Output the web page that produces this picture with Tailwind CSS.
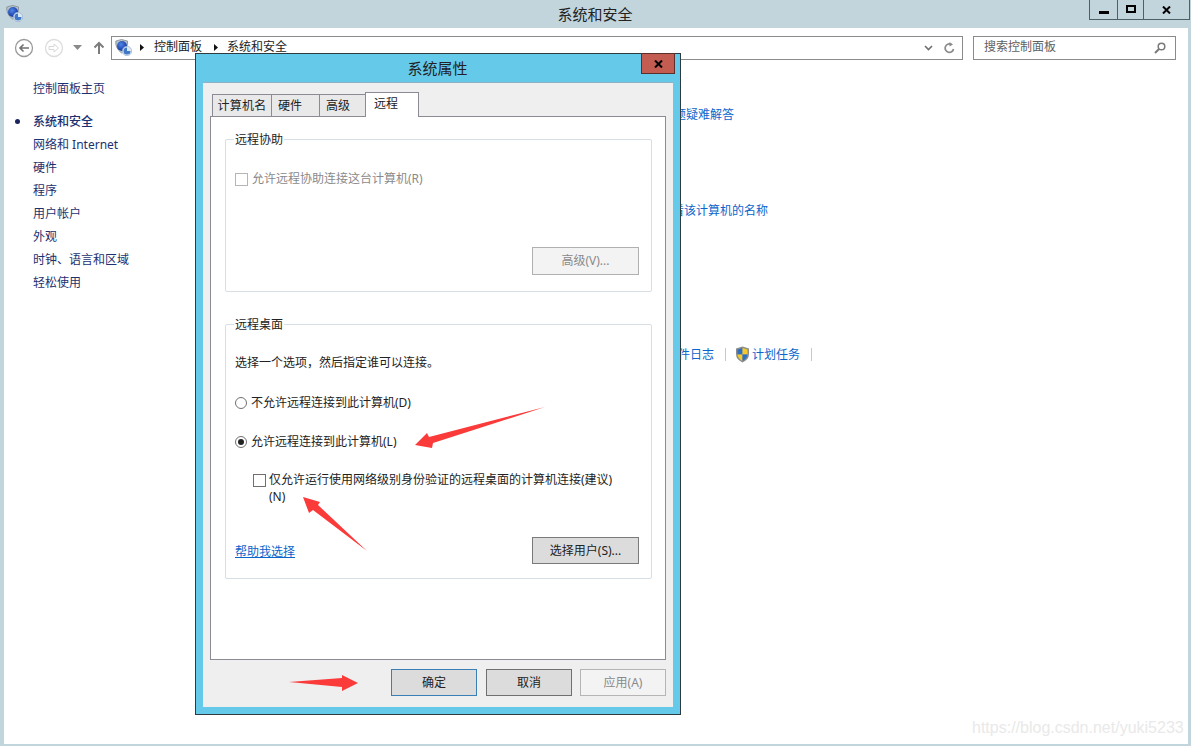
<!DOCTYPE html>
<html lang="zh-CN">
<head>
    <meta charset="UTF-8">
    <title>系统和安全</title>
    <script src="https://cdn.jsdelivr.net/npm/@tailwindcss/browser@4"></script>
</head>
<body class="overflow-hidden">
<div class="relative w-[1191px] h-[746px] bg-[#c3d5dc] pb-[2px] pl-[4px] pr-[3px] flex flex-col text-[12px] leading-[16px] text-[#1a1a1a] font-['Noto_Sans','Noto_Sans_CJK_SC',sans-serif]">

    <!-- title bar -->
    <div class="relative h-[28px] shrink-0 flex items-center justify-center">
        <svg class="absolute left-[2px] top-[5px]" width="17" height="17" viewBox="0 0 17 17">
            <defs>
                <radialGradient id="ball" cx="0.4" cy="0.35" r="0.7"><stop offset="0" stop-color="#4f86e6"/><stop offset="1" stop-color="#0f2f9c"/></radialGradient>
            </defs>
            <path d="M6.500 0.500 L12.500 2 Q13.500 9 6.500 14 Q0 9 0.800 2 Z" fill="#b8c2c8" stroke="#7e8a92" stroke-width="0.800"/>
            <circle cx="7" cy="7" r="5" fill="url(#ball)"/>
            <circle cx="12" cy="12" r="4.700" fill="#dce7f4" stroke="#8aa5c8" stroke-width="0.600"/>
            <path d="M12 12 V8.500 A3.500 3.500 0 1 0 15.500 12 Z" fill="#3f78c6"/>
        </svg>
        <span class="text-[15px] leading-[20px] text-[#222] -mt-[1px] -ml-[2px]">系统和安全</span>
        <div class="absolute right-[-2px] top-0 w-[101px] h-[20px] flex border border-t-0 border-[#4f5f66]">
            <div class="w-[28px] flex items-center justify-center border-r border-[#4f5f66]"><div class="w-[10px] h-[3px] bg-black mt-[5px]"></div></div>
            <div class="w-[26px] flex items-center justify-center border-r border-[#4f5f66]"><div class="w-[10px] h-[8px] border-2 border-black -mt-[2px]"></div></div>
            <div class="flex-1 flex items-center justify-center">
                <svg width="9" height="8" viewBox="0 0 9 8"><path d="M1 0.500 L8 7.500 M8 0.500 L1 7.500" stroke="#000" stroke-width="2"/></svg>
            </div>
        </div>
    </div>

    <!-- explorer window -->
    <div class="flex-1 bg-white flex flex-col">
        <div class="h-[31px] mt-[4px] flex items-center shrink-0">
            <svg class="ml-[10px]" width="20" height="20" viewBox="0 0 20 20"><circle cx="10" cy="10" r="8.500" fill="#fff" stroke="#9a9a9a" stroke-width="1.300"/><path d="M15 10 H6 M9.500 6.500 L6 10 L9.500 13.500" fill="none" stroke="#707070" stroke-width="1.600"/></svg>
            <svg class="ml-[10px]" width="20" height="20" viewBox="0 0 20 20"><circle cx="10" cy="10" r="8.500" fill="#fff" stroke="#dcdcdc" stroke-width="1.300"/><path d="M5 8.500 H10 V6 L14.500 10 L10 14 V11.500 H5 Z" fill="none" stroke="#d8d8d8"/></svg>
            <svg class="ml-[9px]" width="9" height="5" viewBox="0 0 9 5"><path d="M0 0 H9 L4.500 5 Z" fill="#8a8a8a"/></svg>
            <svg class="ml-[11px]" width="12" height="14" viewBox="0 0 12 14"><path d="M6 13 V2 M1.500 6.500 L6 2 L10.500 6.500" fill="none" stroke="#7c7c7c" stroke-width="2"/></svg>
            <div class="ml-[6px] w-[852px] h-[24px] border border-[#8b8b8b] flex items-center">
                <svg class="ml-[3px]" width="17" height="17" viewBox="0 0 17 17">
                    <path d="M6.500 0.500 L12.500 2 Q13.500 9 6.500 14 Q0 9 0.800 2 Z" fill="#b8c2c8" stroke="#7e8a92" stroke-width="0.800"/>
                    <circle cx="7" cy="7" r="5" fill="url(#ball)"/>
                    <circle cx="12" cy="12" r="4.700" fill="#dce7f4" stroke="#8aa5c8" stroke-width="0.600"/>
                    <path d="M12 12 V8.500 A3.500 3.500 0 1 0 15.500 12 Z" fill="#3f78c6"/>
                </svg>
                <svg class="ml-[8px]" width="4" height="7" viewBox="0 0 4 7"><path d="M0 0 L4 3.500 L0 7 Z" fill="#111"/></svg>
                <span class="ml-[10px] -mt-[1px] text-[#222]">控制面板</span>
                <svg class="ml-[12px]" width="4" height="7" viewBox="0 0 4 7"><path d="M0 0 L4 3.500 L0 7 Z" fill="#111"/></svg>
                <span class="ml-[9px] -mt-[1px] text-[#222]">系统和安全</span>
                <svg class="ml-auto" width="9" height="6" viewBox="0 0 9 6"><path d="M1 1 L4.500 4.500 L8 1" fill="none" stroke="#6f6f6f" stroke-width="1.600"/></svg>
                <svg class="ml-[11px] mr-[7px]" width="11" height="12" viewBox="0 0 11 12"><path d="M9.500 7 A4.200 4.200 0 1 1 7 2.300" fill="none" stroke="#8a8a8a" stroke-width="1.700"/><path d="M5.500 0 L9 2.500 L5.500 4.500 Z" fill="#8a8a8a"/></svg>
            </div>
            <div class="ml-[10px] w-[203px] h-[24px] border border-[#8b8b8b] flex items-center pl-[10px] pr-[9px] text-[#5f5f5f]">
                <span class="-mt-[1px]">搜索控制面板</span>
                <svg class="ml-auto" width="12" height="12" viewBox="0 0 12 12"><circle cx="7.500" cy="4.500" r="3.300" fill="none" stroke="#7a7a7a" stroke-width="1.500"/><path d="M5 7 L1 11" stroke="#7a7a7a" stroke-width="2"/></svg>
            </div>
        </div>

        <div class="flex flex-1">
            <!-- nav column -->
            <nav class="w-[191px] shrink-0 pl-[29px] pt-[14px] text-[#1d3170]">
                <div class="h-[23px] flex items-center">控制面板主页</div>
                <div class="relative h-[23px] mt-[10px] flex items-center font-medium">
                    <span class="absolute -left-[18px] top-[9px] w-[5px] h-[5px] rounded-full bg-[#1a2560]"></span>系统和安全
                </div>
                <div class="h-[23px] flex items-center">网络和 Internet</div>
                <div class="h-[23px] flex items-center">硬件</div>
                <div class="h-[23px] flex items-center">程序</div>
                <div class="h-[23px] flex items-center">用户帐户</div>
                <div class="h-[23px] flex items-center">外观</div>
                <div class="h-[23px] flex items-center">时钟、语言和区域</div>
                <div class="h-[23px] flex items-center">轻松使用</div>
            </nav>
            <!-- main column, mostly hidden by the dialog -->
            <main class="flex-1 text-[#0a66cc]">
                <div class="mt-[44px] ml-[467px]">问题疑难解答</div>
                <div class="mt-[80px] ml-[465px]">查看该计算机的名称</div>
                <div class="mt-[127px] ml-[447px] flex items-center">
                    <span>查看事件日志</span>
                    <span class="ml-[11px] w-px h-[13px] bg-[#c8c8c8]"></span>
                    <svg class="ml-[9px]" width="15" height="17" viewBox="0 0 15 17">
                        <path d="M7.500 0.500 L14 2.500 V8 Q14 13.500 7.500 16.500 Q1 13.500 1 8 V2.500 Z" fill="#8c8c8c"/>
                        <path d="M7.500 2 V8.500 H2.500 V3.500 Z" fill="#2c6fc4"/>
                        <path d="M7.500 2 L12.500 3.500 V8.500 H7.500 Z" fill="#f3cb2f"/>
                        <path d="M2.500 8.500 H7.500 V15 Q3 12.500 2.500 8.500 Z" fill="#f3cb2f"/>
                        <path d="M7.500 8.500 H12.500 Q12 12.500 7.500 15 Z" fill="#2c6fc4"/>
                    </svg>
                    <span class="ml-[2px]">计划任务</span>
                    <span class="ml-[11px] w-px h-[13px] bg-[#c8c8c8]"></span>
                </div>
            </main>
        </div>
    </div>

    <!-- dialog window -->
    <div class="absolute left-[195px] top-[53px] w-[486px] h-[662px] bg-[#65c9ea] border border-[#2d3a40] flex flex-col">
        <div class="relative h-[28px] shrink-0 flex items-center justify-center">
            <span class="text-[15px] leading-[20px] text-[#222] -mt-[1px] -ml-[1px]">系统属性</span>
            <div class="absolute right-[5px] top-[-1px] w-[34px] h-[21px] bg-[#c35d52] border border-[#5c2f2b] flex items-center justify-center">
                <svg width="9" height="8" viewBox="0 0 9 8"><path d="M1 0.500 L8 7.500 M8 0.500 L1 7.500" stroke="#000" stroke-width="2"/></svg>
            </div>
        </div>
        <div class="mx-[7px] h-[625px] bg-[#efefef] border-t border-[#8fb1c4] pt-[9px] px-[7px] flex flex-col text-[#222]">
            <div class="relative z-10 h-[25px] pl-[2px] flex items-end -mb-px">
                <div class="h-[23px] w-[60px] bg-[#e9e9e9] border border-[#8b8b96] flex items-center justify-center tracking-[0.3px]">计算机名</div>
                <div class="h-[23px] w-[49px] -ml-px bg-[#e9e9e9] border border-[#8b8b96] pl-[6px] flex items-center">硬件</div>
                <div class="h-[23px] w-[47px] -ml-px bg-[#e9e9e9] border border-[#8b8b96] pl-[6px] flex items-center">高级</div>
                <div class="h-[25px] w-[54px] -ml-px bg-white border border-b-0 border-[#8b8b96] pl-[8px] pb-[2px] flex items-center -mt-[2px]">远程</div>
            </div>
            <div class="h-[544px] bg-white border border-[#8b8b96] pt-[22px] pl-[14px]">
                <div class="relative w-[427px] h-[153px] border border-[#d5dfe5] rounded-[2px] flex flex-col pl-[9px] pr-[12px] text-[#8a8a8a]">
                    <span class="absolute -top-[8px] left-[8px] bg-white px-[1px] text-[#222]">远程协助</span>
                    <div class="mt-[31px] flex items-center">
                        <span class="w-[13px] h-[13px] border border-[#b5b5b5] bg-white"></span>
                        <span class="ml-[4px]">允许远程协助连接这台计算机(R)</span>
                    </div>
                    <div class="ml-auto mt-[60px] w-[107px] h-[28px] bg-[#f3f3f3] border border-[#b0b0b0] flex items-center justify-center">高级(V)...</div>
                </div>
                <div class="relative mt-[32px] w-[427px] h-[255px] border border-[#d5dfe5] rounded-[2px] flex flex-col pl-[9px] pr-[12px]">
                    <span class="absolute -top-[8px] left-[8px] bg-white px-[1px]">远程桌面</span>
                    <div class="mt-[30px]">选择一个选项，然后指定谁可以连接。</div>
                    <div class="mt-[24px] flex items-center">
                        <span class="w-[12px] h-[12px] rounded-full border border-[#707070] bg-white"></span>
                        <span class="ml-[4px]">不允许远程连接到此计算机(D)</span>
                    </div>
                    <div class="mt-[23px] flex items-center">
                        <span class="w-[12px] h-[12px] rounded-full border border-[#707070] bg-white flex items-center justify-center"><span class="w-[6px] h-[6px] rounded-full bg-[#222]"></span></span>
                        <span class="ml-[4px]">允许远程连接到此计算机(L)</span>
                    </div>
                    <div class="mt-[21px] ml-[18px] flex items-start leading-[17px]">
                        <span class="mt-[3px] w-[13px] h-[13px] border border-[#707070] bg-white"></span>
                        <span class="ml-[3px]">仅允许运行使用网络级别身份验证的远程桌面的计算机连接(建议)<br>(N)</span>
                    </div>
                    <div class="mt-[32px] flex items-center justify-between">
                        <a class="text-[#0a66cc] underline mt-[3px]">帮助我选择</a>
                        <div class="w-[107px] h-[27px] bg-[#dcdcdc] border border-[#7a7a7a] flex items-center justify-center">选择用户(S)...</div>
                    </div>
                </div>
            </div>
            <div class="mt-[9px] flex justify-end">
                <div class="w-[86px] h-[27px] bg-[#dcdcdc] border border-[#3a7fb5] flex items-center justify-center">确定</div>
                <div class="ml-[9px] w-[86px] h-[27px] bg-[#dcdcdc] border border-[#707070] flex items-center justify-center">取消</div>
                <div class="ml-[8px] w-[86px] h-[27px] bg-[#f3f3f3] border border-[#b5b5b5] text-[#8a8a8a] flex items-center justify-center">应用(A)</div>
            </div>
        </div>
    </div>

    <!-- red annotation arrows -->
    <svg class="absolute left-0 top-0 pointer-events-none" width="1191" height="746" viewBox="0 0 1191 746">
        <path d="M415 445 L427 433 L429 437 L545 407 L433 443 L432 448 Z" fill="#fb3a3a"/>
        <path d="M303 497 L320 502 L318 505 L367 551 L313 510 L309 513 Z" fill="#fb3a3a"/>
        <path d="M289 682 L342 678 L342 675 L358 683 L342 691 L342 687 Z" fill="#fb3a3a"/>
    </svg>

    <!-- watermark -->
    <span class="absolute left-[972px] top-[718px] text-[16px] leading-[20px] text-[#e9e9e9] font-['Liberation_Sans',sans-serif]">https://blog.csdn.net/yuki5233</span>
</div>
</body>
</html>
